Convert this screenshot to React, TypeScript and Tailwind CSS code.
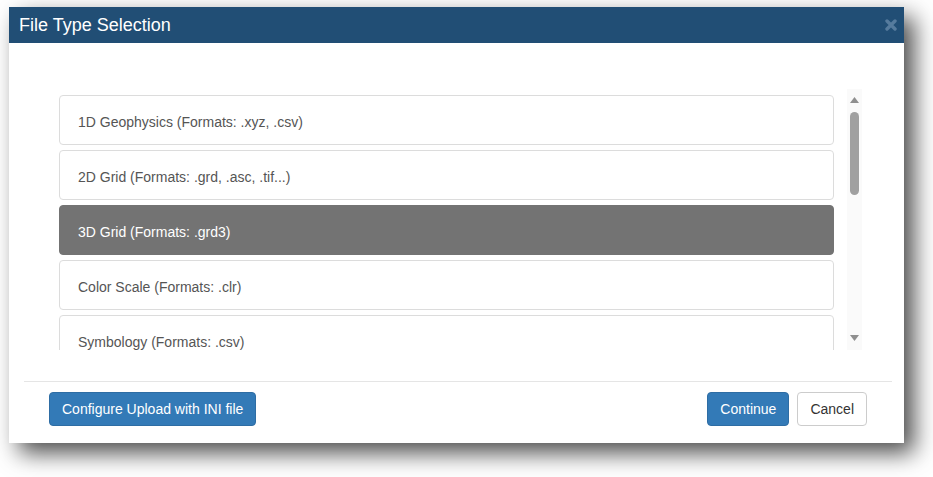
import React, { useState } from 'react';

const fileTypes = [
    '1D Geophysics (Formats: .xyz, .csv)',
    '2D Grid (Formats: .grd, .asc, .tif...)',
    '3D Grid (Formats: .grd3)',
    'Color Scale (Formats: .clr)',
    'Symbology (Formats: .csv)',
];

const App: React.FC = () => {
    const [selected, setSelected] = useState(2);

    return (
        <div className="min-h-[477px] bg-white pt-[7px] pl-[9px] font-['Liberation_Sans',Arial,sans-serif]">
            <div className="w-[895px] h-[436px] bg-white flex flex-col shadow-[10px_10px_22px_rgba(0,0,0,0.7)]">
                {/* Header */}
                <div className="h-[36px] bg-[#214e75] flex items-center justify-between pl-[10px] pr-[7px]">
                    <h4 className="text-[18px] text-white leading-none">File Type Selection</h4>
                    <button className="w-[12px] h-[12px] flex items-center justify-center">
                        <svg width="12" height="12" viewBox="0 0 12 12">
                            <path d="M2 2 L10 10 M10 2 L2 10" stroke="#567b9d" strokeWidth="3.4" strokeLinecap="round" />
                        </svg>
                    </button>
                </div>

                {/* Body */}
                <div className="flex-1 pt-[46px] pl-[50px] pr-[42px]">
                    <div className="flex h-[261px] gap-[13px]">
                        <div className="flex-1 overflow-hidden pt-[6px] flex flex-col gap-[5px]">
                            {fileTypes.map((t, i) => (
                                <div
                                    key={t}
                                    onClick={() => setSelected(i)}
                                    className={
                                        i === selected
                                            ? 'shrink-0 h-[50px] flex items-center pl-[18px] pt-[5px] rounded-[4px] border border-[#737373] bg-[#737373] text-white text-[14px] cursor-pointer'
                                            : 'shrink-0 h-[50px] flex items-center pl-[18px] pt-[5px] rounded-[4px] border border-[#dcdcdc] bg-white text-[#555] text-[14px] cursor-pointer'
                                    }
                                >
                                    {t}
                                </div>
                            ))}
                        </div>
                        {/* Scrollbar */}
                        <div className="w-[15px] bg-[#fafafa] flex flex-col items-center pt-[8px] pb-[9px]">
                            <svg width="9" height="6" viewBox="0 0 9 6">
                                <path d="M4.5 0 L9 6 L0 6 Z" fill="#8f8f8f" />
                            </svg>
                            <div className="mt-[9px] w-[9px] h-[83px] rounded-full bg-[#a0a0a0]" />
                            <div className="flex-1" />
                            <svg width="9" height="6" viewBox="0 0 9 6">
                                <path d="M0 0 L9 0 L4.5 6 Z" fill="#8f8f8f" />
                            </svg>
                        </div>
                    </div>
                </div>

                {/* Footer */}
                <div className="ml-[15px] mr-[12px] border-t border-[#e5e5e5] pt-[10px] pb-[17px] px-[25px] flex items-center justify-between">
                    <button className="h-[34px] px-[12px] rounded-[4px] bg-[#337ab7] border border-[#2e6da4] text-white text-[14px]">
                        Configure Upload with INI file
                    </button>
                    <div className="flex gap-[8px]">
                        <button className="h-[34px] px-[12px] rounded-[4px] bg-[#337ab7] border border-[#2e6da4] text-white text-[14px]">
                            Continue
                        </button>
                        <button className="h-[34px] px-[12px] rounded-[4px] bg-white border border-[#ccc] text-[#333] text-[14px]">
                            Cancel
                        </button>
                    </div>
                </div>
            </div>
        </div>
    );
};

export default App;
